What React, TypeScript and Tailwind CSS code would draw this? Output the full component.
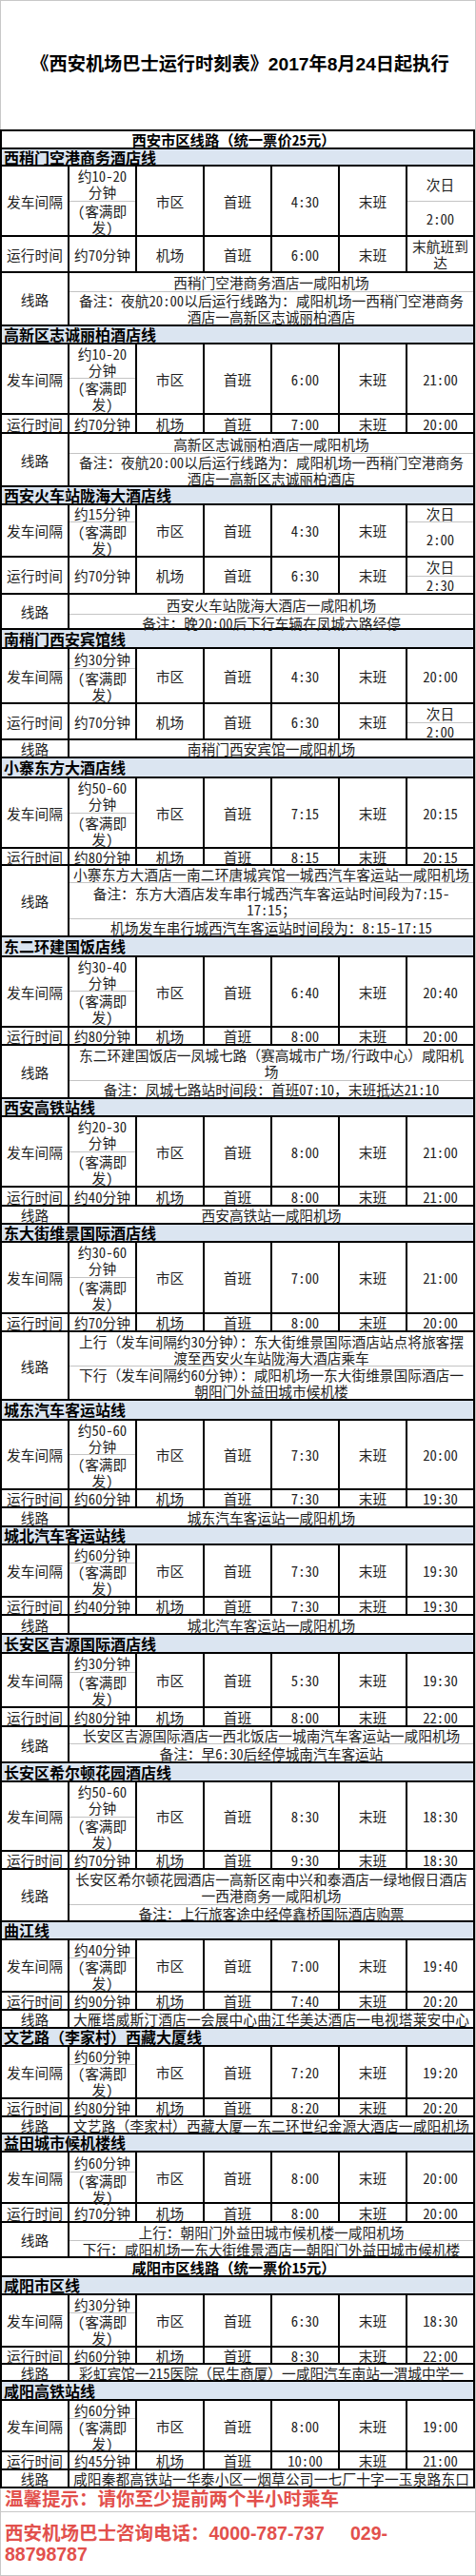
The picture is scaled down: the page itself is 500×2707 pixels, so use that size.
import React from "react";

type Split = { s: string; top: string[]; bot: string[] };
type Val = string | string[] | Split;
type Sub = { h?: string; lines: string[]; j?: boolean };
type Block = {
  name: string;
  hh: string;
  dh: string;
  ds: string;
  dTop: string[];
  dBot: string[];
  first1: string;
  last1: Val;
  rh: string;
  dur: string;
  first2: string;
  last2: Val;
  roh: string;
  subs: Sub[];
};

const KM = ["(客满即", "发)"];

const blocks1: Block[] = [
  {
    name: "西稍门空港商务酒店线",
    hh: "h-[18px]",
    dh: "h-[74px]",
    ds: "h-[37px]",
    dTop: ["约10-20", "分钟"],
    dBot: KM,
    first1: "4:30",
    last1: { s: "h-[37px]", top: ["次日"], bot: ["2:00"] },
    rh: "h-[38px]",
    dur: "约70分钟",
    first2: "6:00",
    last2: ["末航班到", "达"],
    roh: "h-[56px]",
    subs: [
      { h: "h-[20px]", lines: ["西稍门空港商务酒店一咸阳机场"] },
      { lines: ["备注：夜航20:00以后运行线路为：咸阳机场一西稍门空港商务", "酒店一高新区志诚丽柏酒店"] },
    ],
  },
  {
    name: "高新区志诚丽柏酒店线",
    hh: "h-[19px]",
    dh: "h-[74px]",
    ds: "h-[36px]",
    dTop: ["约10-20", "分钟"],
    dBot: KM,
    first1: "6:00",
    last1: "21:00",
    rh: "h-[20px]",
    dur: "约70分钟",
    first2: "7:00",
    last2: "20:00",
    roh: "h-[56px]",
    subs: [
      { h: "h-[21px]", lines: ["高新区志诚丽柏酒店一咸阳机场"] },
      { lines: ["备注：夜航20:00以后运行线路为：咸阳机场一西稍门空港商务", "酒店一高新区志诚丽柏酒店"] },
    ],
  },
  {
    name: "西安火车站陇海大酒店线",
    hh: "h-[19px]",
    dh: "h-[55px]",
    ds: "h-[18px]",
    dTop: ["约15分钟"],
    dBot: KM,
    first1: "4:30",
    last1: { s: "h-[18px]", top: ["次日"], bot: ["2:00"] },
    rh: "h-[39px]",
    dur: "约70分钟",
    first2: "6:30",
    last2: { s: "h-[20px]", top: ["次日"], bot: ["2:30"] },
    roh: "h-[37px]",
    subs: [
      { h: "h-[21px]", lines: ["西安火车站陇海大酒店一咸阳机场"] },
      { lines: ["备注：晚20:00后下行车辆在凤城六路经停"] },
    ],
  },
  {
    name: "南稍门西安宾馆线",
    hh: "h-[20px]",
    dh: "h-[58px]",
    ds: "h-[21px]",
    dTop: ["约30分钟"],
    dBot: KM,
    first1: "4:30",
    last1: "20:00",
    rh: "h-[38px]",
    dur: "约70分钟",
    first2: "6:30",
    last2: { s: "h-[20px]", top: ["次日"], bot: ["2:00"] },
    roh: "h-[19px]",
    subs: [{ lines: ["南稍门西安宾馆一咸阳机场"] }],
  },
  {
    name: "小寨东方大酒店线",
    hh: "h-[21px]",
    dh: "h-[74px]",
    ds: "h-[37px]",
    dTop: ["约50-60", "分钟"],
    dBot: KM,
    first1: "7:15",
    last1: "20:15",
    rh: "h-[18px]",
    dur: "约80分钟",
    first2: "8:15",
    last2: "20:15",
    roh: "h-[75px]",
    subs: [
      { h: "h-[18px]", lines: ["小寨东方大酒店一南二环唐城宾馆一城西汽车客运站一咸阳机场"], j: true },
      { h: "h-[38px]", lines: ["备注：东方大酒店发车串行城西汽车客运站时间段为7:15-", "17:15；"] },
      { lines: ["机场发车串行城西汽车客运站时间段为：8:15-17:15"] },
    ],
  },
  {
    name: "东二环建国饭店线",
    hh: "h-[21px]",
    dh: "h-[74px]",
    ds: "h-[36px]",
    dTop: ["约30-40", "分钟"],
    dBot: KM,
    first1: "6:40",
    last1: "20:40",
    rh: "h-[19px]",
    dur: "约80分钟",
    first2: "8:00",
    last2: "20:00",
    roh: "h-[56px]",
    subs: [
      { h: "h-[37px]", lines: ["东二环建国饭店一凤城七路（赛高城市广场/行政中心）咸阳机", "场"] },
      { lines: ["备注：凤城七路站时间段：首班07:10，末班抵达21:10"] },
    ],
  },
  {
    name: "西安高铁站线",
    hh: "h-[19px]",
    dh: "h-[74px]",
    ds: "h-[37px]",
    dTop: ["约20-30", "分钟"],
    dBot: KM,
    first1: "8:00",
    last1: "21:00",
    rh: "h-[20px]",
    dur: "约40分钟",
    first2: "8:00",
    last2: "21:00",
    roh: "h-[19px]",
    subs: [{ lines: ["西安高铁站一咸阳机场"] }],
  },
  {
    name: "东大街维景国际酒店线",
    hh: "h-[19px]",
    dh: "h-[75px]",
    ds: "h-[37px]",
    dTop: ["约30-60", "分钟"],
    dBot: KM,
    first1: "7:00",
    last1: "21:00",
    rh: "h-[19px]",
    dur: "约70分钟",
    first2: "8:00",
    last2: "20:00",
    roh: "h-[72px]",
    subs: [
      { h: "h-[36px]", lines: ["上行（发车间隔约30分钟）：东大街维景国际酒店站点将旅客摆", "渡至西安火车站陇海大酒店乘车"] },
      { lines: ["下行（发车间隔约60分钟）：咸阳机场一东大街维景国际酒店一", "朝阳门外益田城市候机楼"] },
    ],
  },
  {
    name: "城东汽车客运站线",
    hh: "h-[21px]",
    dh: "h-[73px]",
    ds: "h-[36px]",
    dTop: ["约50-60", "分钟"],
    dBot: KM,
    first1: "7:30",
    last1: "20:00",
    rh: "h-[19px]",
    dur: "约60分钟",
    first2: "7:30",
    last2: "19:30",
    roh: "h-[20px]",
    subs: [{ lines: ["城东汽车客运站一咸阳机场"] }],
  },
  {
    name: "城北汽车客运站线",
    hh: "h-[19px]",
    dh: "h-[55px]",
    ds: "h-[19px]",
    dTop: ["约60分钟"],
    dBot: KM,
    first1: "7:30",
    last1: "19:30",
    rh: "h-[19px]",
    dur: "约40分钟",
    first2: "7:30",
    last2: "19:30",
    roh: "h-[20px]",
    subs: [{ lines: ["城北汽车客运站一咸阳机场"] }],
  },
  {
    name: "长安区吉源国际酒店线",
    hh: "h-[20px]",
    dh: "h-[57px]",
    ds: "h-[20px]",
    dTop: ["约30分钟"],
    dBot: KM,
    first1: "5:30",
    last1: "19:30",
    rh: "h-[20px]",
    dur: "约80分钟",
    first2: "8:00",
    last2: "22:00",
    roh: "h-[38px]",
    subs: [
      { h: "h-[18px]", lines: ["长安区吉源国际酒店一西北饭店一城南汽车客运站一咸阳机场"] },
      { lines: ["备注：早6:30后经停城南汽车客运站"] },
    ],
  },
  {
    name: "长安区希尔顿花园酒店线",
    hh: "h-[20px]",
    dh: "h-[73px]",
    ds: "h-[37px]",
    dTop: ["约50-60", "分钟"],
    dBot: KM,
    first1: "8:30",
    last1: "18:30",
    rh: "h-[19px]",
    dur: "约70分钟",
    first2: "9:30",
    last2: "18:30",
    roh: "h-[55px]",
    subs: [
      { h: "h-[37px]", lines: ["长安区希尔顿花园酒店一高新区南中兴和泰酒店一绿地假日酒店", "一西港商务一咸阳机场"] },
      { lines: ["备注：上行旅客途中经停鑫桥国际酒店购票"] },
    ],
  },
  {
    name: "曲江线",
    hh: "h-[19px]",
    dh: "h-[55px]",
    ds: "h-[19px]",
    dTop: ["约40分钟"],
    dBot: KM,
    first1: "7:00",
    last1: "19:40",
    rh: "h-[19px]",
    dur: "约90分钟",
    first2: "7:40",
    last2: "20:20",
    roh: "h-[19px]",
    subs: [{ lines: ["大雁塔威斯汀酒店一会展中心曲江华美达酒店一电视塔莱安中心"], j: true }],
  },
  {
    name: "文艺路（李家村）西藏大厦线",
    hh: "h-[19px]",
    dh: "h-[55px]",
    ds: "h-[19px]",
    dTop: ["约60分钟"],
    dBot: KM,
    first1: "7:20",
    last1: "19:20",
    rh: "h-[19px]",
    dur: "约80分钟",
    first2: "8:20",
    last2: "20:20",
    roh: "h-[18px]",
    subs: [{ lines: ["文艺路（李家村）西藏大厦一东二环世纪金源大酒店一咸阳机场"], j: true }],
  },
  {
    name: "益田城市候机楼线",
    hh: "h-[19px]",
    dh: "h-[54px]",
    ds: "h-[21px]",
    dTop: ["约60分钟"],
    dBot: KM,
    first1: "8:00",
    last1: "20:00",
    rh: "h-[20px]",
    dur: "约70分钟",
    first2: "8:00",
    last2: "20:00",
    roh: "h-[37px]",
    subs: [
      { h: "h-[19px]", lines: ["上行：朝阳门外益田城市候机楼一咸阳机场"] },
      { lines: ["下行：咸阳机场一东大街维景酒店一朝阳门外益田城市候机楼"] },
    ],
  },
];

const blocks2: Block[] = [
  {
    name: "咸阳市区线",
    hh: "h-[19px]",
    dh: "h-[55px]",
    ds: "h-[19px]",
    dTop: ["约30分钟"],
    dBot: KM,
    first1: "6:30",
    last1: "18:30",
    rh: "h-[18px]",
    dur: "约60分钟",
    first2: "8:30",
    last2: "22:00",
    roh: "h-[18px]",
    subs: [{ lines: ["彩虹宾馆一215医院（民生商厦）一咸阳汽车南站一渭城中学一"] }],
  },
  {
    name: "咸阳高铁站线",
    hh: "h-[20px]",
    dh: "h-[54px]",
    ds: "h-[19px]",
    dTop: ["约60分钟"],
    dBot: KM,
    first1: "8:00",
    last1: "19:00",
    rh: "h-[19px]",
    dur: "约45分钟",
    first2: "10:00",
    last2: "21:00",
    roh: "h-[19px]",
    subs: [{ lines: ["咸阳秦都高铁站一华泰小区一烟草公司一七厂十字一玉泉路东口"], j: true }],
  },
];

function Lines({ lines }: { lines: string[] }) {
  return (
    <>
      {lines.map((t, i) => (
        <span key={i} className="block whitespace-nowrap">
          {t}
        </span>
      ))}
    </>
  );
}

function Cell({ children }: { children: React.ReactNode }) {
  return (
    <div className="w-[71px] shrink-0 h-full border-r-2 border-black flex flex-col items-center justify-center text-center">
      {children}
    </div>
  );
}

function SplitCell({ s, top, bot }: Split) {
  return (
    <div className="w-[71px] shrink-0 h-full border-r-2 border-black flex flex-col text-center">
      <div className={`${s} shrink-0 border-b border-[#c4c4c4] flex flex-col items-center justify-center`}>
        <Lines lines={top} />
      </div>
      <div className="flex-1 flex flex-col items-center justify-center">
        <Lines lines={bot} />
      </div>
    </div>
  );
}

function ValCell({ v }: { v: Val }) {
  if (typeof v === "string") return <Cell>{v}</Cell>;
  if (Array.isArray(v))
    return (
      <Cell>
        <Lines lines={v} />
      </Cell>
    );
  return <SplitCell s={v.s} top={v.top} bot={v.bot} />;
}

function SectionRow({ h, text }: { h: string; text: string }) {
  return (
    <div
      className={`${h} border-b-2 border-r-2 border-black flex items-center justify-center pr-[8px] font-bold text-[15.3px] text-black`}
    >
      {text}
    </div>
  );
}

function BlockView({ b }: { b: Block }) {
  return (
    <>
      <div
        className={`${b.hh} border-b-2 border-r-2 border-black bg-[#dbe5f1] pl-[2px] flex items-center font-bold text-[16px] text-black`}
      >
        {b.name}
      </div>
      <div className={`${b.dh} flex border-b-2 border-black`}>
        <Cell>发车间隔</Cell>
        <SplitCell s={b.ds} top={b.dTop} bot={b.dBot} />
        <Cell>市区</Cell>
        <Cell>首班</Cell>
        <Cell>{b.first1}</Cell>
        <Cell>末班</Cell>
        <ValCell v={b.last1} />
      </div>
      <div className={`${b.rh} flex border-b-2 border-black`}>
        <Cell>运行时间</Cell>
        <Cell>{b.dur}</Cell>
        <Cell>机场</Cell>
        <Cell>首班</Cell>
        <Cell>{b.first2}</Cell>
        <Cell>末班</Cell>
        <ValCell v={b.last2} />
      </div>
      <div className={`${b.roh} flex border-b-2 border-black`}>
        <Cell>线路</Cell>
        <div className="w-[426px] shrink-0 h-full border-r-2 border-black flex flex-col">
          {b.subs.map((s, i) => {
            const last = i === b.subs.length - 1;
            return (
              <div
                key={i}
                className={`${last ? "flex-1" : `${s.h} shrink-0 border-b border-[#c4c4c4]`} flex flex-col items-center justify-center text-center`}
              >
                {s.j ? (
                  <span className="block w-full px-[4px] text-justify [text-align-last:justify]">{s.lines[0]}</span>
                ) : (
                  <Lines lines={s.lines} />
                )}
              </div>
            );
          })}
        </div>
      </div>
    </>
  );
}

export default function App() {
  return (
    <div className="w-[500px] bg-white">
      <div className="h-[136px] border-t border-l border-r border-[#c8c8c8] flex items-center justify-center pl-[4px]">
        <h1 className="font-['Liberation_Sans','Noto_Sans_CJK_SC',sans-serif] font-bold text-[19.2px] text-black whitespace-nowrap">
          《西安机场巴士运行时刻表》2017年8月24日起执行
        </h1>
      </div>
      <div className="flex">
        <div className="w-[499px] border-l-2 border-t-2 border-black font-['Noto_Sans_Mono_CJK_SC','Noto_Sans_CJK_SC',sans-serif] text-[14.7px] leading-[17px] text-[#1e1e1e]">
          <SectionRow h="h-[19px]" text="西安市区线路（统一票价25元）" />
          {blocks1.map((b, i) => (
            <BlockView key={i} b={b} />
          ))}
          <SectionRow h="h-[20px]" text="咸阳市区线路（统一票价15元）" />
          {blocks2.map((b, i) => (
            <BlockView key={i} b={b} />
          ))}
        </div>
        <div className="w-[1px] bg-[#c8c8c8]" />
      </div>
      <div className="border-l border-r border-b border-[#c8c8c8] font-['Liberation_Sans','Noto_Sans_CJK_SC',sans-serif] font-bold text-[19.5px] text-[#e2504c]">
        <div className="h-[25px] border-b border-[#c8c8c8] flex items-center pl-[4px] whitespace-nowrap">
          温馨提示：请你至少提前两个半小时乘车
        </div>
        <div className="h-[66px] flex flex-col justify-center pl-[4px] leading-[22px]">
          <span className="block whitespace-nowrap">
            西安机场巴士咨询电话：4000-787-737<span className="inline-block w-[27px]" />029-
          </span>
          <span className="block">88798787</span>
        </div>
      </div>
    </div>
  );
}
